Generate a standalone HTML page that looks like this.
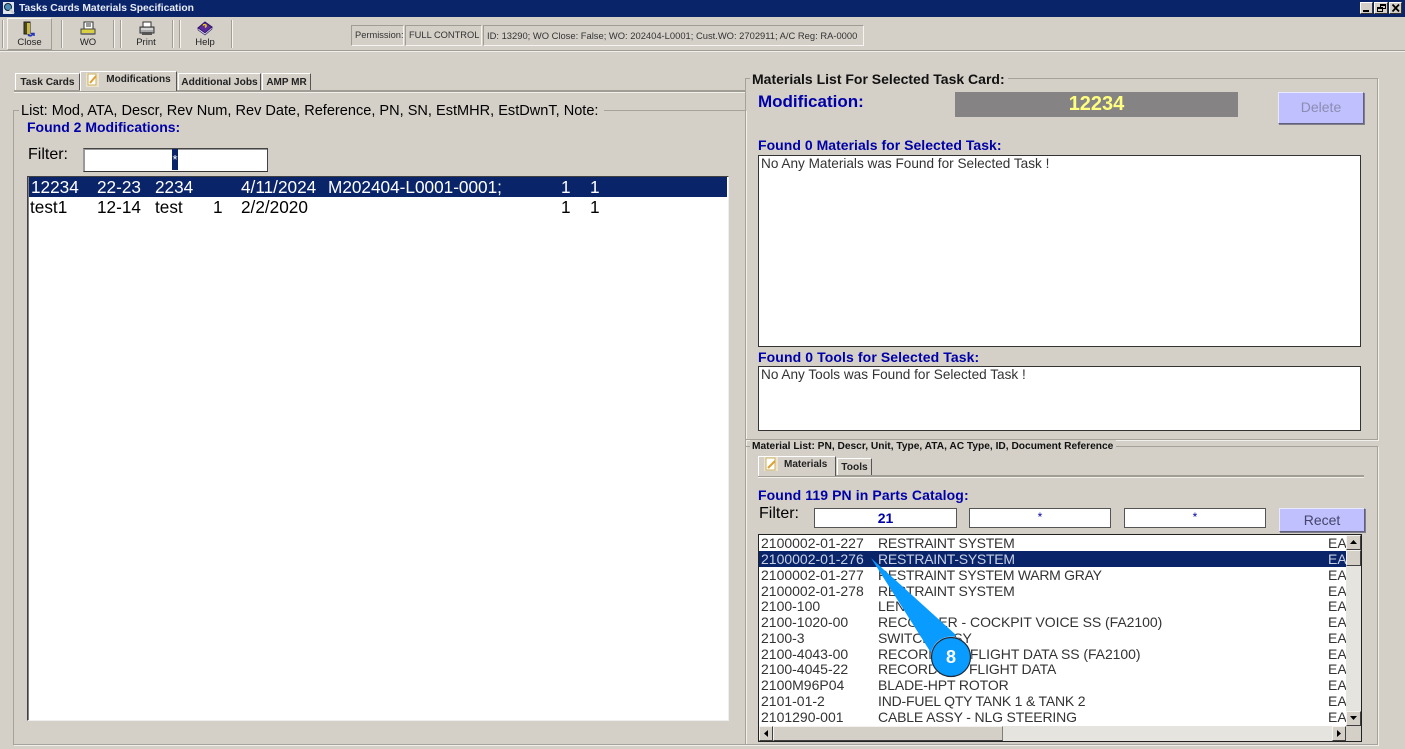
<!DOCTYPE html>
<html><head><meta charset="utf-8"><style>
html,body{margin:0;padding:0;width:1405px;height:749px;overflow:hidden;background:#d4d0c8;font-family:"Liberation Sans",sans-serif;color:#000}
.a{position:absolute;white-space:nowrap}
.b{position:absolute;box-sizing:border-box}
.t{position:absolute;white-space:nowrap;line-height:16px;height:16px}
.blue{color:#0000a8;font-weight:bold}
.box{position:absolute;box-sizing:border-box;background:#fff;border:1px solid #404040;border-right-color:#eee;border-bottom-color:#eee;box-shadow:inset 1px 0 0 #808080}
.inp{position:absolute;box-sizing:border-box;background:#fff;border:1px solid #555;text-align:center;color:#0000a8;font-weight:bold}
.grp{position:absolute;box-sizing:border-box;border:1px solid #a5a29b;box-shadow:1px 1px 0 #f2f0ea}
.btn{position:absolute;box-sizing:border-box;background:#c0c0ff;border:1px solid;border-color:#e8e8ff #606078 #606078 #e8e8ff;box-shadow:1px 1px 0 #807f90;text-align:center}
.tb{position:absolute;font-size:9.500px;color:#222;text-align:center;line-height:12px}
.sep{position:absolute;top:20px;height:28px;width:1px;background:#a09d95;box-shadow:1px 0 0 #f5f4f0}
.tab{position:absolute;box-sizing:border-box;font-size:10.200px;font-weight:bold;color:#222;line-height:17px;border-top:1px solid #fff;border-left:1px solid #fff;border-right:1px solid #555;text-align:center}
.sbb{position:absolute;box-sizing:border-box;background:#d4d0c8;border:1px solid;border-color:#f4f3f0 #404040 #404040 #f4f3f0}
.cell{position:absolute;white-space:nowrap}
</style></head><body>
<!-- Title bar -->
<div class="b" style="left:0;top:0;width:1405px;height:17px;background:#0a246a"></div>
<svg class="a" style="left:2px;top:1px" width="14" height="14" viewBox="0 0 14 14"><rect x="1" y="1" width="11" height="12" fill="#dfe6ef"/><circle cx="6" cy="6" r="3.5" fill="#4a90b8" stroke="#123" stroke-width="1"/><path d="M8 8.5 L12 12.5" stroke="#ccc" stroke-width="2"/></svg>
<div class="a" style="left:19px;top:2px;font-size:10.300px;line-height:13px;font-weight:bold;color:#e8ecf5">Tasks Cards Materials Specification</div>
<div class="b" style="left:1360px;top:2px;width:13px;height:12px;background:#d4d0c8;border:1px solid;border-color:#fff #333 #333 #fff"><div class="b" style="left:2px;top:7px;width:6px;height:2px;background:#000"></div></div>
<div class="b" style="left:1374px;top:2px;width:14px;height:12px;background:#d4d0c8;border:1px solid;border-color:#fff #333 #333 #fff"><div class="b" style="left:5px;top:1px;width:6px;height:5px;border:1px solid #000;border-top-width:2px"></div><div class="b" style="left:2px;top:4px;width:6px;height:5px;border:1px solid #000;border-top-width:2px;background:#d4d0c8"></div></div>
<div class="b" style="left:1389px;top:2px;width:13px;height:12px;background:#d4d0c8;border:1px solid;border-color:#fff #333 #333 #fff"><svg class="a" style="left:1px;top:0" width="10" height="10"><path d="M1.5 1.5L8 8.5M8 1.5L1.5 8.5" stroke="#000" stroke-width="1.8"/></svg></div>

<!-- Toolbar -->
<div class="b" style="left:0;top:50px;width:1405px;height:1px;background:#a09d95;box-shadow:0 1px 0 #f0efeb"></div>
<div class="sep" style="left:2px"></div>
<div class="b" style="left:7px;top:18px;width:45px;height:32px;border:1px solid;border-color:#f5f4f0 #a09d95 #a09d95 #f5f4f0"></div>
<div class="sep" style="left:61px"></div>
<div class="sep" style="left:113px"></div>
<div class="sep" style="left:120px"></div>
<div class="sep" style="left:172px"></div>
<div class="sep" style="left:179px"></div>
<div class="sep" style="left:231px"></div>
<svg class="a" style="left:22px;top:21px" width="14" height="16" viewBox="0 0 14 16"><rect x="2" y="1" width="6" height="12" fill="#4d4a18" stroke="#222"/><rect x="5" y="2" width="3" height="11" fill="#c8b848"/><path d="M6 14 C8 15.5 10 15 11 12.5 M9 12.5h3v2.5" fill="none" stroke="#2233bb" stroke-width="1.5"/></svg>
<svg class="a" style="left:80px;top:21px" width="16" height="15" viewBox="0 0 16 15"><rect x="4" y="1" width="9" height="8" fill="#fff" stroke="#333"/><path d="M6 3h5M6 5h5" stroke="#333"/><path d="M1 8h14v5H1z" fill="#d8d040" stroke="#444"/><rect x="2" y="12" width="12" height="2" fill="#777"/></svg>
<svg class="a" style="left:139px;top:21px" width="16" height="15" viewBox="0 0 16 15"><rect x="4" y="1" width="8" height="5" fill="#fff" stroke="#333"/><path d="M1 6h14v6H1z" fill="#aaa" stroke="#333"/><path d="M2 8h12" stroke="#fff"/><rect x="3" y="11" width="10" height="3" fill="#555"/></svg>
<svg class="a" style="left:197px;top:21px" width="16" height="15" viewBox="0 0 16 15"><path d="M8 1L15 6L8 12L1 7Z" fill="#5a2a9a" stroke="#2a1060"/><path d="M1 7L8 12L15 6V8L8 14L1 9Z" fill="#d8d8e8" stroke="#2a1060" stroke-width=".6"/><path d="M6 4.500C7 3 10 3.500 9 5.500L8 6.500" fill="none" stroke="#f0d020" stroke-width="1.400"/></svg>
<div class="tb" style="left:7px;top:37px;width:45px">Close</div>
<div class="tb" style="left:62px;top:37px;width:52px">WO</div>
<div class="tb" style="left:120px;top:37px;width:52px">Print</div>
<div class="tb" style="left:179px;top:37px;width:52px">Help</div>

<!-- Status -->
<div class="b" style="left:351px;top:25px;width:53px;height:21px;border:1px solid;border-color:#a09d95 #f5f4f0 #f5f4f0 #a09d95;font-size:9.300px;line-height:19px;padding-left:3px;color:#333;white-space:nowrap">Permission:</div>
<div class="b" style="left:405px;top:25px;width:77px;height:21px;border:1px solid;border-color:#a09d95 #f5f4f0 #f5f4f0 #a09d95;font-size:9.300px;line-height:19px;padding-left:3px;color:#333;white-space:nowrap">FULL CONTROL</div>
<div class="b" style="left:483px;top:25px;width:381px;height:21px;border:1px solid;border-color:#a09d95 #f5f4f0 #f5f4f0 #a09d95;font-size:9.400px;line-height:19px;padding-left:3px;color:#333;white-space:nowrap">ID: 13290; WO Close: False; WO: 202404-L0001; Cust.WO: 2702911; A/C Reg: RA-0000</div>

<!-- Left tabs -->
<div class="b" style="left:14px;top:90px;width:731px;height:2px;background:#a09d95;box-shadow:0 1px 0 #f2f0ea"></div>
<div class="tab" style="left:15px;top:73px;width:65px;height:17px;">Task Cards</div>
<div class="tab" style="left:80px;top:71px;width:97px;height:20px;background:#d4d0c8;padding-left:20px;line-height:15px;font-size:10px">Modifications</div>
<svg class="a" style="left:85px;top:72px" width="14" height="15" viewBox="0 0 14 15"><rect x="1" y="1" width="14" height="14" fill="#f6ecd0" opacity=".7"/><rect x="3" y="2" width="8" height="11" fill="#fff" stroke="#c8b060"/><path d="M5 11L11 4" stroke="#e0a030" stroke-width="2"/></svg>
<div class="tab" style="left:178px;top:73px;width:83px;height:17px;">Additional Jobs</div>
<div class="tab" style="left:262px;top:73px;width:49px;height:17px;font-size:10px">AMP MR</div>

<!-- Left group -->
<div class="grp" style="left:13px;top:110px;width:733px;height:635px"></div>
<div class="a" style="left:19px;top:103px;font-size:14.550px;line-height:16px;background:#d4d0c8;padding:0 6px 0 2px">List: Mod, ATA, Descr, Rev Num, Rev Date, Reference, PN, SN, EstMHR, EstDwnT, Note:</div>
<div class="t blue" style="left:27px;top:119px;font-size:14px">Found 2 Modifications:</div>
<div class="t" style="left:28px;top:147px;font-size:16px">Filter:</div>
<div class="inp" style="left:83px;top:148px;width:185px;height:24px;border-color:#444 #444 #333 #999;box-shadow:inset 1px 1px 0 #999"></div>
<div class="b" style="left:172px;top:149px;width:6px;height:21px;background:#0a246a;color:#fff;font-size:13px;line-height:22px;text-align:center">*</div>
<div class="box" style="left:27px;top:176px;width:702px;height:545px"></div>
<div class="b" style="left:29px;top:177px;width:698px;height:20px;background:#0a246a"></div>
<div style="font-size:17.200px;line-height:20px;color:#fff">
<span class="cell" style="left:31px;top:177px">12234</span><span class="cell" style="left:97px;top:177px">22-23</span><span class="cell" style="left:155px;top:177px">2234</span><span class="cell" style="left:241px;top:177px">4/11/2024</span><span class="cell" style="left:328px;top:177px">M202404-L0001-0001;</span><span class="cell" style="left:561px;top:177px">1</span><span class="cell" style="left:590px;top:177px">1</span>
</div>
<div style="font-size:17.200px;line-height:20px;color:#000">
<span class="cell" style="left:30px;top:197px">test1</span><span class="cell" style="left:97px;top:197px">12-14</span><span class="cell" style="left:155px;top:197px">test</span><span class="cell" style="left:213px;top:197px">1</span><span class="cell" style="left:241px;top:197px">2/2/2020</span><span class="cell" style="left:561px;top:197px">1</span><span class="cell" style="left:590px;top:197px">1</span>
</div>

<!-- Right upper group -->
<div class="grp" style="left:745px;top:78px;width:633px;height:362px"></div>
<div class="a" style="left:750px;top:71px;font-size:14px;line-height:16px;font-weight:bold;color:#111;background:#d4d0c8;padding:0 3px 0 2px">Materials List For Selected Task Card:</div>
<div class="t blue" style="left:758px;top:94px;font-size:17px">Modification:</div>
<div class="b" style="left:955px;top:92px;width:283px;height:25px;background:#858383;color:#ffff80;font-weight:bold;font-size:20px;line-height:25px;text-align:center">12234</div>
<div class="btn" style="left:1278px;top:92px;width:86px;height:32px;font-size:14px;line-height:29px;color:#8c8cb0">Delete</div>
<div class="t blue" style="left:758px;top:137px;font-size:14px;letter-spacing:.03px">Found 0 Materials for Selected Task:</div>
<div class="box" style="left:758px;top:155px;width:603px;height:192px;border-color:#333;box-shadow:none;font-size:13.600px;line-height:16px;padding:0 2px;color:#333">No Any Materials was Found for Selected Task !</div>
<div class="t blue" style="left:758px;top:349px;font-size:14px;letter-spacing:.1px">Found 0 Tools for Selected Task:</div>
<div class="box" style="left:758px;top:366px;width:603px;height:65px;border-color:#333;box-shadow:none;font-size:13.600px;line-height:16px;padding:0 2px;color:#333">No Any Tools was Found for Selected Task !</div>

<!-- Right lower group -->
<div class="grp" style="left:745px;top:446px;width:633px;height:299px"></div>
<div class="a" style="left:750px;top:440px;font-size:10.200px;line-height:14px;font-weight:bold;color:#111;background:#d4d0c8;padding:0 3px 0 2px">Material List: PN, Descr, Unit, Type, ATA, AC Type, ID, Document Reference</div>
<div class="b" style="left:758px;top:475px;width:606px;height:2px;background:#a09d95;box-shadow:0 1px 0 #f2f0ea"></div>
<div class="tab" style="left:758px;top:456px;width:78px;height:20px;background:#d4d0c8;padding-left:25px;line-height:15px;text-align:left;font-size:10px">Materials</div>
<svg class="a" style="left:764px;top:457px" width="14" height="15" viewBox="0 0 14 15"><rect x="0" y="0" width="14" height="14" fill="#f6ecd0" opacity=".7"/><rect x="2" y="1" width="9" height="12" fill="#fff" stroke="#c8b060"/><path d="M4 11L11 4" stroke="#e0a030" stroke-width="2"/></svg>
<div class="tab" style="left:837px;top:458px;width:35px;height:17px;">Tools</div>
<div class="t blue" style="left:758px;top:487px;font-size:14px;letter-spacing:.1px">Found 119 PN in Parts Catalog:</div>
<div class="t" style="left:759px;top:506px;font-size:16px">Filter:</div>
<div class="inp" style="left:814px;top:508px;width:143px;height:20px;font-size:14px;line-height:19px">21</div>
<div class="inp" style="left:969px;top:508px;width:142px;height:20px;font-size:12px;line-height:17px;font-weight:normal">*</div>
<div class="inp" style="left:1124px;top:508px;width:142px;height:20px;font-size:12px;line-height:17px;font-weight:normal">*</div>
<div class="btn" style="left:1279px;top:508px;width:86px;height:24px;font-size:14px;line-height:22px;color:#44446a">Recet</div>

<div class="box" style="left:758px;top:534px;width:604px;height:208px;border-color:#222;box-shadow:none"></div>
<div class="b" style="left:759px;top:551px;width:587px;height:16px;background:#0a246a"></div>
<div style="font-size:14px;line-height:16px;color:#333">
<span class="cell" style="left:761px;top:535px">2100002-01-227</span><span class="cell" style="left:878px;top:535px;letter-spacing:-.25px">RESTRAINT SYSTEM</span><span class="cell" style="left:1328px;top:535px">EA</span>
<span class="cell" style="left:761px;top:551px;color:#c8d0e4">2100002-01-276</span><span class="cell" style="left:878px;top:551px;color:#c8d0e4;letter-spacing:-.25px">RESTRAINT-SYSTEM</span><span class="cell" style="left:1328px;top:551px;color:#c8d0e4">EA</span>
<span class="cell" style="left:761px;top:567px">2100002-01-277</span><span class="cell" style="left:878px;top:567px;letter-spacing:-.27px">RESTRAINT SYSTEM WARM GRAY</span><span class="cell" style="left:1328px;top:567px">EA</span>
<span class="cell" style="left:761px;top:583px">2100002-01-278</span><span class="cell" style="left:878px;top:583px;letter-spacing:-.25px">RESTRAINT SYSTEM</span><span class="cell" style="left:1328px;top:583px">EA</span>
<span class="cell" style="left:761px;top:598px">2100-100</span><span class="cell" style="left:878px;top:598px">LENS</span><span class="cell" style="left:1328px;top:598px">EA</span>
<span class="cell" style="left:761px;top:614px">2100-1020-00</span><span class="cell" style="left:878px;top:614px;letter-spacing:-.05px">RECORDER - COCKPIT VOICE SS (FA2100)</span><span class="cell" style="left:1328px;top:614px">EA</span>
<span class="cell" style="left:761px;top:630px">2100-3</span><span class="cell" style="left:878px;top:630px;letter-spacing:-.18px">SWITCH ASSY</span><span class="cell" style="left:1328px;top:630px">EA</span>
<span class="cell" style="left:761px;top:646px">2100-4043-00</span><span class="cell" style="left:878px;top:646px;letter-spacing:-.06px">RECORDER - FLIGHT DATA SS (FA2100)</span><span class="cell" style="left:1328px;top:646px">EA</span>
<span class="cell" style="left:761px;top:661px">2100-4045-22</span><span class="cell" style="left:878px;top:661px;letter-spacing:-.14px">RECORDER - FLIGHT DATA</span><span class="cell" style="left:1328px;top:661px">EA</span>
<span class="cell" style="left:761px;top:677px">2100M96P04</span><span class="cell" style="left:878px;top:677px;letter-spacing:-.13px">BLADE-HPT ROTOR</span><span class="cell" style="left:1328px;top:677px">EA</span>
<span class="cell" style="left:761px;top:693px">2101-01-2</span><span class="cell" style="left:878px;top:693px;letter-spacing:-.2px">IND-FUEL QTY TANK 1 &amp; TANK 2</span><span class="cell" style="left:1328px;top:693px">EA</span>
<span class="cell" style="left:761px;top:709px">2101290-001</span><span class="cell" style="left:878px;top:709px;letter-spacing:-.16px">CABLE ASSY - NLG STEERING</span><span class="cell" style="left:1328px;top:709px">EA</span>
</div>

<!-- Scrollbars -->
<div class="b" style="left:1346px;top:535px;width:15px;height:191px;background:#e6e4de"></div>
<div class="sbb" style="left:1346px;top:535px;width:15px;height:15px"><svg class="a" style="left:2px;top:3px" width="9" height="7"><path d="M4.500 1L8 5H1Z" fill="#000"/></svg></div>
<div class="sbb" style="left:1346px;top:550px;width:15px;height:16px"></div>
<div class="sbb" style="left:1346px;top:711px;width:15px;height:15px"><svg class="a" style="left:2px;top:3px" width="9" height="7"><path d="M1 1H8L4.500 5Z" fill="#000"/></svg></div>
<div class="b" style="left:759px;top:726px;width:587px;height:15px;background:#e6e4de"></div>
<div class="sbb" style="left:759px;top:726px;width:14px;height:15px"><svg class="a" style="left:3px;top:2px" width="7" height="9"><path d="M5 1V8L1 4.500Z" fill="#000"/></svg></div>
<div class="b" style="left:773px;top:726px;width:230px;height:15px;background:#d4d0c8;border:1px solid;border-color:#f4f3f0 #807e78 #404040 #f4f3f0"></div>
<div class="sbb" style="left:1332px;top:726px;width:14px;height:15px"><svg class="a" style="left:3px;top:2px" width="7" height="9"><path d="M1 1V8L5 4.500Z" fill="#000"/></svg></div>
<div class="b" style="left:1346px;top:726px;width:15px;height:15px;background:#d4d0c8"></div>

<!-- Callout -->
<svg class="a" style="left:860px;top:550px" width="120" height="130" viewBox="860 550 120 130">
<path d="M871 558 L956 635 L933 656 Z" fill="#0a9bff"/>
<circle cx="951" cy="657" r="20.500" fill="#fff" opacity=".8"/>
<circle cx="951" cy="657" r="19.500" fill="#0a9bff" stroke="#1a2a3a" stroke-width="1.200"/>
<text x="951" y="663" text-anchor="middle" font-family="Liberation Sans" font-weight="bold" font-size="18" fill="#fff">8</text>
</svg>
</body></html>
